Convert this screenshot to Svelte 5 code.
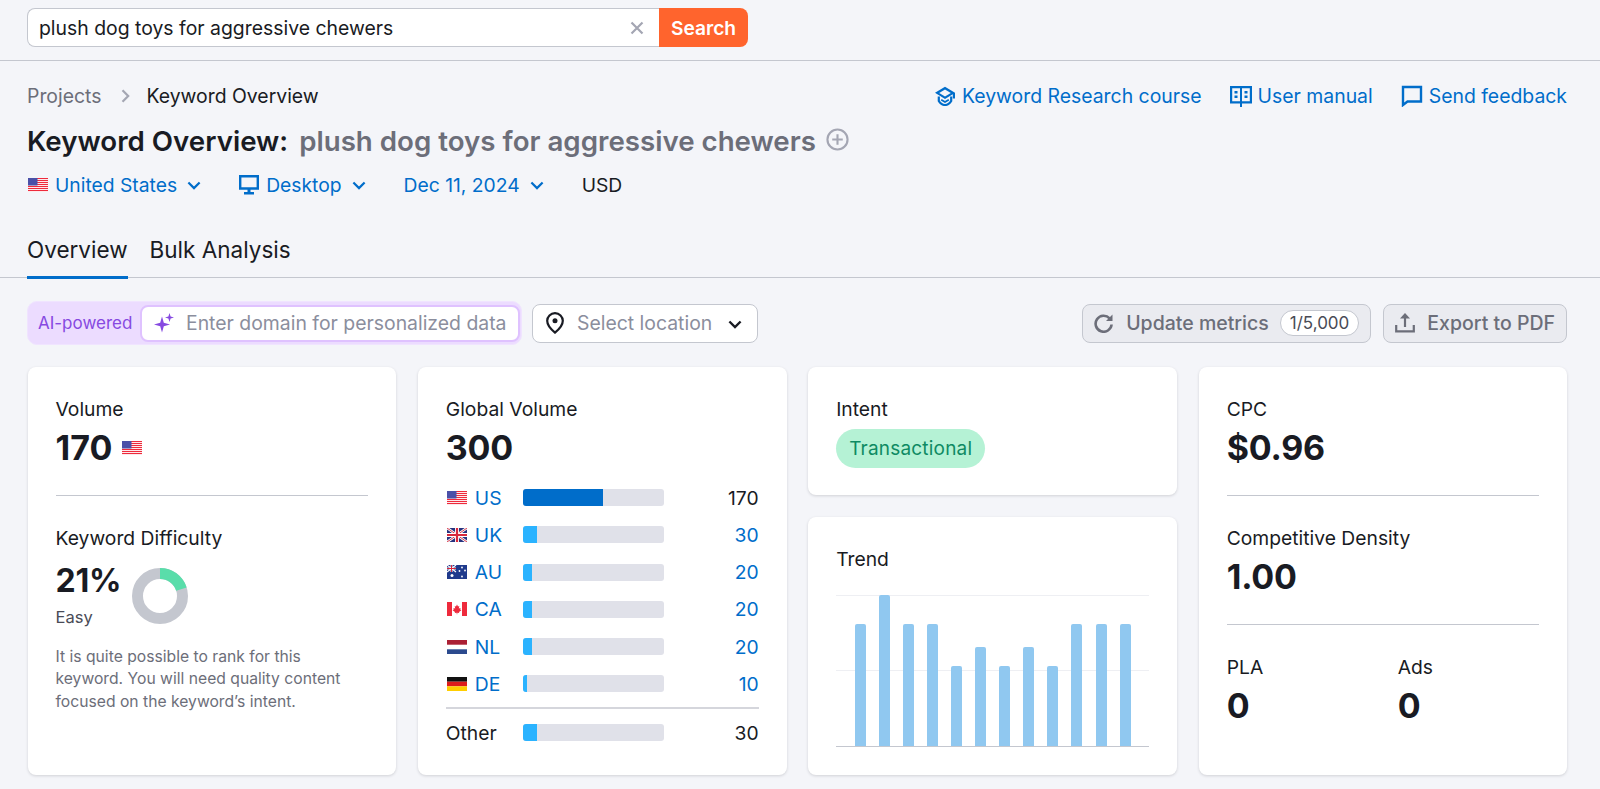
<script>
  const countries = [
    { code: 'US', pct: 80, value: '170', dark: true },
    { code: 'UK', pct: 14, value: '30' },
    { code: 'AU', pct: 9, value: '20' },
    { code: 'CA', pct: 9, value: '20' },
    { code: 'NL', pct: 9, value: '20' },
    { code: 'DE', pct: 4, value: '10' }
  ];
  const trend = [121.7, 151, 121.7, 121.7, 80.3, 98.7, 80.3, 98.7, 80.3, 121.7, 121.7, 121.7];
</script>

{#snippet flag(code)}
  <svg class="flag" viewBox="0 0 20 14" aria-hidden="true">
    {#if code === 'US'}
      <rect width="20" height="14" fill="#fff" />
      {#each [0, 2, 4, 6, 8, 10, 12] as y}
        <rect y={y} width="20" height="1.1" fill="#ee2a3c" />
      {/each}
      <rect width="9.5" height="7.5" fill="#4a50a8" />
    {:else if code === 'UK'}
      <rect width="20" height="14" fill="#27337f" />
      <path d="M0 0 20 14M20 0 0 14" stroke="#fff" stroke-width="2.6" />
      <path d="M0 0 20 14M20 0 0 14" stroke="#d8394c" stroke-width="1" />
      <path d="M10 0V14M0 7H20" stroke="#fff" stroke-width="4" />
      <path d="M10 0V14M0 7H20" stroke="#d8283c" stroke-width="2.2" />
    {:else if code === 'AU'}
      <rect width="20" height="14" fill="#1f3a8c" />
      <path d="M0 0 9 7M9 0 0 7" stroke="#fff" stroke-width="1.2" />
      <path d="M4.5 0V7M0 3.5H9" stroke="#fff" stroke-width="2" />
      <path d="M4.5 0V7M0 3.5H9" stroke="#d8283c" stroke-width="1" />
      <g fill="#fff">
        <circle cx="5" cy="10.5" r="1.5" /><circle cx="15" cy="2.5" r=".9" /><circle cx="12.5" cy="6" r=".9" />
        <circle cx="18" cy="5.5" r=".9" /><circle cx="15" cy="11.5" r=".9" />
      </g>
    {:else if code === 'CA'}
      <rect width="20" height="14" fill="#fff" />
      <rect width="5" height="14" fill="#ee2a3c" />
      <rect x="15" width="5" height="14" fill="#ee2a3c" />
      <path d="M10 2.5 11 4.5 12.3 4 11.8 6.6 13.6 6 13.2 7.4 14.4 8.2 12 10 12.2 11 10.3 10.7V12.2H9.7V10.7L7.8 11 8 10 5.6 8.2 6.8 7.4 6.4 6 8.2 6.6 7.7 4 9 4.5Z" fill="#ee2a3c" />
    {:else if code === 'NL'}
      <rect width="20" height="14" fill="#fff" />
      <rect width="20" height="4.7" fill="#ab2034" />
      <rect y="9.3" width="20" height="4.7" fill="#2b4a8e" />
    {:else}
      <rect width="20" height="4.7" fill="#111" />
      <rect y="4.7" width="20" height="4.6" fill="#dd1c1c" />
      <rect y="9.3" width="20" height="4.7" fill="#ffce00" />
    {/if}
  </svg>
{/snippet}

{#snippet chev()}
  <svg class="chev" viewBox="0 0 14 9" aria-hidden="true"><path d="M1.4 1.5 7 7.1 12.6 1.5" fill="none" stroke="currentColor" stroke-width="2.2" /></svg>
{/snippet}

<div class="page">
  <header class="topbar">
    <div class="search">
      <div class="search-input">
        <span class="query">plush dog toys for aggressive chewers</span>
        <svg class="clear" viewBox="0 0 14 14" aria-hidden="true"><path d="M1.5 1.5 12.5 12.5M12.5 1.5 1.5 12.5" stroke="currentColor" stroke-width="2.2" /></svg>
      </div>
      <button class="search-btn">Search</button>
    </div>
  </header>

  <section class="head">
    <div class="crumb-row">
      <nav class="crumbs">
        <span class="muted">Projects</span>
        <svg class="crumb-sep" viewBox="0 0 9 14" aria-hidden="true"><path d="M1.5 1.2 7.2 7 1.5 12.8" fill="none" stroke="currentColor" stroke-width="2.2" /></svg>
        <span>Keyword Overview</span>
      </nav>
      <div class="links">
        <a class="lnk">
          <svg class="lnk-ico cap" viewBox="0 0 22 20" aria-hidden="true">
            <path d="M11 .8 21 6.8V12.4H18.8V8.2L11 13 1 6.8Z" fill="currentColor" />
            <path d="M11 3.6 5.2 6.9 11 10.4 16.8 6.9Z" fill="#f4f5f9" />
            <path d="M4.8 10.6V15C6.5 17.8 8.8 19 11 19S15.5 17.8 17.2 15V10.6" fill="none" stroke="currentColor" stroke-width="2.2" />
            <path d="M7.2 13.8 11 16 14.8 13.8" fill="none" stroke="currentColor" stroke-width="1.8" />
          </svg>
          Keyword Research course
        </a>
        <a class="lnk">
          <svg class="lnk-ico" viewBox="0 0 22 22" aria-hidden="true">
            <path d="M0 1H22V18.5H12V22H10V18.5H0Z" fill="currentColor" />
            <path d="M2.2 3.2H10V16.3H2.2ZM12 3.2H19.8V16.3H12Z" fill="#f4f5f9" />
            <path d="M4.5 6H7.5V8.5H4.5ZM4.5 10.5H7.5V13H4.5ZM14.5 6H17.5V8.5H14.5ZM14.5 10.5H17.5V13H14.5Z" fill="currentColor" />
          </svg>
          User manual
        </a>
        <a class="lnk">
          <svg class="lnk-ico" viewBox="0 0 22 22" aria-hidden="true"><path d="M2 2H20V16.5H6.5L2 20Z" fill="none" stroke="currentColor" stroke-width="2.4" /></svg>
          Send feedback
        </a>
      </div>
    </div>

    <h1 class="title">
      <span>Keyword Overview:</span>
      <span class="title-kw">plush dog toys for aggressive chewers</span>
      <svg class="title-add" viewBox="0 0 24 24" aria-hidden="true"><circle cx="12" cy="12" r="10.5" fill="none" stroke="currentColor" stroke-width="2.2" /><path d="M12 6.5V17.5M6.5 12H17.5" stroke="currentColor" stroke-width="2.2" /></svg>
    </h1>

    <div class="filters">
      <span class="filter">{@render flag('US')}United States{@render chev()}</span>
      <span class="filter">
        <svg class="desk" viewBox="0 0 20 20" aria-hidden="true"><path d="M1.2 1.2H18.8V13.5H1.2Z" fill="none" stroke="currentColor" stroke-width="2.4" /><path d="M8.5 14H11.5V17H15V19.5H5V17H8.5Z" fill="currentColor" /></svg>
        Desktop{@render chev()}
      </span>
      <span class="filter">Dec 11, 2024{@render chev()}</span>
      <span class="usd">USD</span>
    </div>

    <div class="tabs">
      <span class="tab active">Overview</span>
      <span class="tab">Bulk Analysis</span>
    </div>
  </section>

  <section class="toolbar">
    <div class="ai">
      <span class="ai-label">AI-powered</span>
      <div class="ai-input">
        <svg class="spark" viewBox="0 0 20 20" aria-hidden="true"><path d="M8 5 9.8 11.2 16 13 9.8 14.8 8 21 6.2 14.8 0 13 6.2 11.2Z" fill="currentColor" transform="translate(0 -1.5)" /><path d="M15.5 0 16.6 3.4 20 4.5 16.6 5.6 15.5 9 14.4 5.6 11 4.5 14.4 3.4Z" fill="currentColor" /></svg>
        <span class="ph">Enter domain for personalized data</span>
      </div>
    </div>
    <div class="loc">
      <svg class="pin" viewBox="0 0 18 22" aria-hidden="true"><path d="M9 1.2C4.6 1.2 1.2 4.6 1.2 8.8 1.2 13.6 6 18.2 9 20.6 12 18.2 16.8 13.6 16.8 8.8 16.8 4.6 13.4 1.2 9 1.2Z" fill="none" stroke="#191b23" stroke-width="2.2" /><circle cx="9" cy="8.8" r="2.5" fill="#191b23" /></svg>
      <span class="ph">Select location</span>
      <svg class="chev loc-chev" viewBox="0 0 14 9" aria-hidden="true"><path d="M1.4 1.5 7 7.1 12.6 1.5" fill="none" stroke="currentColor" stroke-width="2.4" /></svg>
    </div>
    <div class="spacer"></div>
    <button class="btn">
      <svg class="btn-ico" viewBox="0 0 20 20" aria-hidden="true"><path d="M15.6 5.4A8 8 0 1 0 17.6 11.5" fill="none" stroke="currentColor" stroke-width="2.6" /><path d="M18.5 1.5V8H12Z" fill="currentColor" /></svg>
      Update metrics
      <span class="count">1/5,000</span>
    </button>
    <button class="btn">
      <svg class="btn-ico" viewBox="0 0 20 20" aria-hidden="true"><path d="M10 14V3" stroke="currentColor" stroke-width="2.2" /><path d="M10 0 15 5.5H5Z" fill="currentColor" /><path d="M1.2 12V18.4H18.8V12" fill="none" stroke="currentColor" stroke-width="2.2" /></svg>
      Export to PDF
    </button>
  </section>

  <main class="grid">
    <article class="card">
      <div class="label">Volume</div>
      <div class="big with-flag">170 {@render flag('US')}</div>
      <hr />
      <div class="label">Keyword Difficulty</div>
      <div class="kd">
        <div>
          <div class="big kd-num">21%</div>
          <div class="easy">Easy</div>
        </div>
        <svg class="donut" viewBox="0 0 56 56" aria-hidden="true">
          <circle cx="28" cy="28" r="22.5" fill="none" stroke="#c4c7cf" stroke-width="11" />
          <circle cx="28" cy="28" r="22.5" fill="none" stroke="#59ddaa" stroke-width="11" pathLength="100" stroke-dasharray="20 80" transform="rotate(-90 28 28)" />
        </svg>
      </div>
      <p class="desc">It is quite possible to rank for this keyword. You will need quality content focused on the keyword’s intent.</p>
    </article>

    <article class="card">
      <div class="label">Global Volume</div>
      <div class="big">300</div>
      <div class="rows">
        {#each countries as c}
          <div class="row">
            <span class="cc">{@render flag(c.code)}<span class="code">{c.code}</span></span>
            <span class="bar"><span class="fill" class:dark={c.dark} style="width:{c.pct}px"></span></span>
            <span class="val" class:plain={c.dark}>{c.value}</span>
          </div>
        {/each}
      </div>
      <div class="row other">
        <span class="cc">Other</span>
        <span class="bar"><span class="fill" style="width:14px"></span></span>
        <span class="val plain">30</span>
      </div>
    </article>

    <div class="stack">
      <article class="card intent">
        <div class="label">Intent</div>
        <span class="pill">Transactional</span>
      </article>
      <article class="card trend">
        <div class="label">Trend</div>
        <div class="chart">
          <span class="gridline top"></span>
          <span class="gridline mid"></span>
          {#each trend as h}
            <span class="tbar" style="height:{h}px"></span>
          {/each}
        </div>
      </article>
    </div>

    <article class="card">
      <div class="label">CPC</div>
      <div class="big">$0.96</div>
      <hr />
      <div class="label">Competitive Density</div>
      <div class="big">1.00</div>
      <hr />
      <div class="pair">
        <div><div class="label">PLA</div><div class="big">0</div></div>
        <div><div class="label">Ads</div><div class="big">0</div></div>
      </div>
    </article>
  </main>
</div>

<style>
  :global(body) {
    margin: 0;
    background: #f4f5f9;
    color: #191b23;
    font-family: Inter, "Liberation Sans", sans-serif;
  }
  .page { height: 789px; overflow: hidden; background: #f4f5f9; }
  .topbar { height: 60px; border-bottom: 1px solid #c4c7cf; display: flex; align-items: flex-start; padding-left: 27px; }
  .search { display: flex; width: 721px; height: 39px; margin-top: 8px; }
  .search-input { flex: 1; display: flex; align-items: center; justify-content: space-between; background: #fff; border: 1px solid #c4c7cf; border-right: 0; border-radius: 8px 0 0 8px; padding: 0 15px 0 11px; }
  .query { font-size: 19.4px; line-height: 24px; }
  .clear { width: 14px; height: 14px; color: #a4a6b3; }
  .search-btn { width: 89px; border: 0; background: #ff642d; color: #fff; font: 600 19.2px Inter, sans-serif; border-radius: 0 8px 8px 0; padding: 0; }

  .head { padding: 23px 33px 0 27px; height: 217px; box-sizing: border-box; border-bottom: 1px solid #c4c7cf; }
  .crumb-row { display: flex; justify-content: space-between; align-items: center; height: 24px; font-size: 19.4px; }
  .crumbs { display: flex; align-items: center; }
  .muted { color: #6c6e79; }
  .crumb-sep { width: 9px; height: 14px; margin: 0 16px 0 20px; color: #a4a6b3; }
  .links { display: flex; gap: 28px; }
  .lnk { display: flex; align-items: center; gap: 6px; color: #006dca; }
  .lnk-ico { width: 22px; height: 22px; }
  .cap { height: 20px; }
  .title { margin: 16px 0 0; height: 34px; display: flex; align-items: center; font-size: 27.7px; font-weight: 600; line-height: 34px; }
  .title-kw { color: #6c6e79; margin-left: 11px; }
  .title-add { width: 23px; height: 23px; color: #a4a6b3; margin: -3px 0 0 10px; }
  .filters { display: flex; align-items: center; margin-top: 15px; height: 24px; font-size: 19.3px; }
  .filter { display: flex; align-items: center; color: #006dca; margin-right: 38px; }
  .filter .flag { margin-right: 7px; margin-left: 1px; }
  .chev { width: 14px; height: 9px; margin-left: 10px; margin-top: 1px; flex: none; }
  .desk { width: 20px; height: 20px; margin-right: 7px; }
  .usd { color: #191b23; }
  .flag { width: 20px; height: 14px; flex: none; display: block; }
  .tabs { display: flex; gap: 22px; margin-top: 25px; font-size: 22.5px; }
  .tab { height: 56px; box-sizing: border-box; padding-top: 14px; line-height: 28px; }
  .tab.active { border-bottom: 3px solid #006dca; height: 57px; }

  .toolbar { display: flex; align-items: center; padding: 23px 33px 0 27px; height: 44px; }
  .ai { display: flex; align-items: center; height: 44px; box-sizing: border-box; width: 495px; background: #ecdcff; border-radius: 10px; padding-left: 10px; border: 1px solid #f0e4ff; }
  .ai-label { color: #8649e1; font-size: 17px; width: 102px; flex: none; white-space: nowrap; }
  .ai-input { width: 380px; height: 37px; box-sizing: border-box; background: #fff; border: 2px solid #dfc2ff; border-radius: 8px; display: flex; align-items: center; padding-left: 12px; gap: 12px; }
  .spark { width: 20px; height: 20px; color: #8649e1; flex: none; }
  .ph { color: #8b8e9d; font-size: 19.4px; white-space: nowrap; }
  .loc { width: 226px; height: 39px; box-sizing: border-box; margin-left: 10px; background: #fff; border: 1px solid #c4c7cf; border-radius: 8px; display: flex; align-items: center; padding: 0 15px 0 13px; gap: 13px; }
  .pin { width: 18px; height: 22px; flex: none; }
  .loc-chev { margin: 2px 0 0 auto; color: #191b23; }
  .spacer { flex: 1; }
  .btn { display: flex; align-items: center; height: 39px; background: #eaebf0; border: 1px solid #c4c7cf; border-radius: 8px; color: #6c6e79; font: 500 19.5px Inter, sans-serif; padding: 0 11px; margin-left: 12px; white-space: nowrap; }
  .btn-ico { width: 20px; height: 20px; margin-right: 12px; flex: none; }
  .count { margin-left: 11px; background: #fff; border: 1px solid #c4c7cf; border-radius: 13px; height: 26px; box-sizing: border-box; padding: 0 9px; font-size: 17px; font-weight: 400; line-height: 24px; color: #494b56; }

  .grid { display: grid; grid-template-columns: repeat(4, 1fr); gap: 21.5px; padding: 22px 32.5px 0 27.5px; height: 408px; }
  .stack { display: flex; flex-direction: column; gap: 22px; min-height: 0; }
  .card { background: #fff; border-radius: 8px; box-shadow: 0 1px 3px rgba(25, 27, 35, .16); padding: 29px 28px 0; box-sizing: border-box; min-width: 0; }
  .label { font-size: 19.3px; line-height: 26px; height: 26px; white-space: nowrap; }
  .big { font-size: 34px; font-weight: 700; line-height: 40px; height: 40px; margin-top: 6px; letter-spacing: -.2px; }
  .with-flag { display: flex; align-items: center; gap: 10px; letter-spacing: 0; }
  hr { border: 0; border-top: 1px solid #c4c7cf; margin: 27px 0 29px; height: 0; }
  .kd { display: flex; gap: 11px; margin-top: 8px; }
  .kd-num { margin-top: 2px; height: 40px; font-size: 32px; }
  .easy { font-size: 16.5px; line-height: 22px; margin-top: 5px; color: #494b56; }
  .donut { width: 56px; height: 56px; flex: none; margin-top: 9px; }
  .desc { margin: 18px 0 0; font-size: 15.7px; line-height: 22.4px; color: #6c6e79; }

  .rows { margin-top: 21px; display: flex; flex-direction: column; gap: 20.3px; padding-bottom: 15px; border-bottom: 2px solid #d5d6dc; }
  .row { display: flex; align-items: center; height: 17px; font-size: 19.3px; }
  .cc { width: 77px; display: flex; align-items: center; flex: none; }
  .cc .flag { margin-left: 1px; }
  .code { margin-left: 8px; color: #006dca; }
  .bar { width: 141px; height: 17px; background: #e0e1e9; border-radius: 3px; display: block; overflow: hidden; flex: none; }
  .fill { display: block; height: 100%; background: #2bb3ff; }
  .fill.dark { background: #006dca; }
  .val { flex: 1; text-align: right; color: #006dca; }
  .val.plain { color: #191b23; }
  .other { margin-top: 15px; }

  .intent { height: 128px; flex: none; }
  .pill { display: block; width: fit-content; margin-top: 7px; background: #b5f2d5; color: #0e8a63; font-size: 19px; line-height: 39px; height: 39px; border-radius: 20px; padding: 0 13px; letter-spacing: .2px; }
  .trend { flex: 1; }
  .chart { position: relative; margin-top: 23px; height: 151px; display: flex; gap: 13.1px; align-items: flex-end; padding: 0 18.5px; border-bottom: 1px solid #c4c7cf; }
  .gridline { position: absolute; left: 0; right: 0; height: 1px; background: #eeeff3; }
  .gridline.top { top: 0; }
  .gridline.mid { top: 75px; }
  .tbar { position: relative; width: 11px; flex: none; background: #90c8f0; border-radius: 2px 2px 0 0; }
  .pair { display: grid; grid-template-columns: 171px 1fr; }
</style>
